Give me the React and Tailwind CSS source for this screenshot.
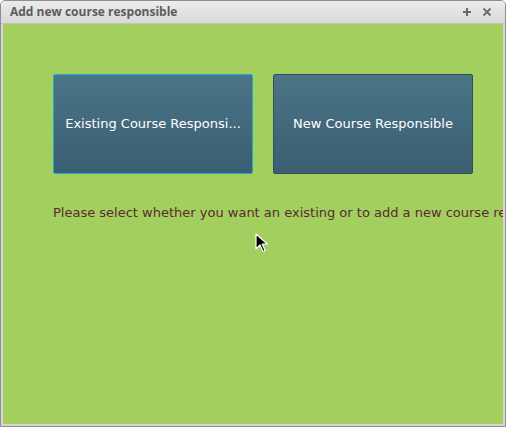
export default function App() {
  return (
    <div className="relative w-[506px] h-[427px] bg-white" style={{ fontFamily: '"DejaVu Sans", sans-serif' }}>
      <div className="flex flex-col w-full h-full border border-[#8e8e8e] rounded-t-[5px] bg-[#d6d6d6] overflow-hidden">
        <div className="flex items-center h-[23px] shrink-0 px-[9px] bg-gradient-to-b from-[#ececec] to-[#d9d9d9] border-b border-[#c4c4c4]">
          <span className="text-[12px] font-bold text-[#5c5c5c] leading-none" style={{ fontFamily: '"Open Sans", sans-serif' }}>Add new course responsible</span>
          <div className="ml-auto flex items-center gap-[10px] mr-[4px]">
            <svg width="10" height="10" viewBox="0 0 10 10">
              <path d="M5 1v8M1 5h8" stroke="#6a6a6a" strokeWidth="2" />
            </svg>
            <svg width="10" height="10" viewBox="0 0 10 10">
              <path d="M1.5 1.5l7 7M8.5 1.5l-7 7" stroke="#6a6a6a" strokeWidth="1.8" />
            </svg>
          </div>
        </div>
        <div className="flex-1 mx-[2px] mb-[2px] bg-[#a3cf5e] flex flex-col pl-[50px] pt-[50px]">
          <div className="flex gap-[20px]">
            <button className="w-[200px] h-[100px] rounded-[2px] border border-[#22a9d3] bg-gradient-to-b from-[#4b7487] to-[#3a5e72] text-white text-[13px] flex items-center justify-center">
              Existing Course Responsi...
            </button>
            <button className="w-[200px] h-[100px] rounded-[2px] border border-[#31505f] bg-gradient-to-b from-[#4b7487] to-[#3a5e72] text-white text-[13px] flex items-center justify-center">
              New Course Responsible
            </button>
          </div>
          <div className="mt-[31px] text-[13px] text-[#5b2a32] whitespace-nowrap overflow-hidden leading-[16px]">
            Please select whether you want an existing or to add a new course responsible.
          </div>
        </div>
      </div>
      <svg className="absolute left-[255px] top-[233px]" width="14" height="20" viewBox="0 0 14 20">
        <path d="M1 1v15l4-4 3 6.5 2.2-1-3-6.3H12.5z" fill="#000" stroke="#fff" strokeWidth="1.2" strokeLinejoin="round" />
      </svg>
    </div>
  );
}
